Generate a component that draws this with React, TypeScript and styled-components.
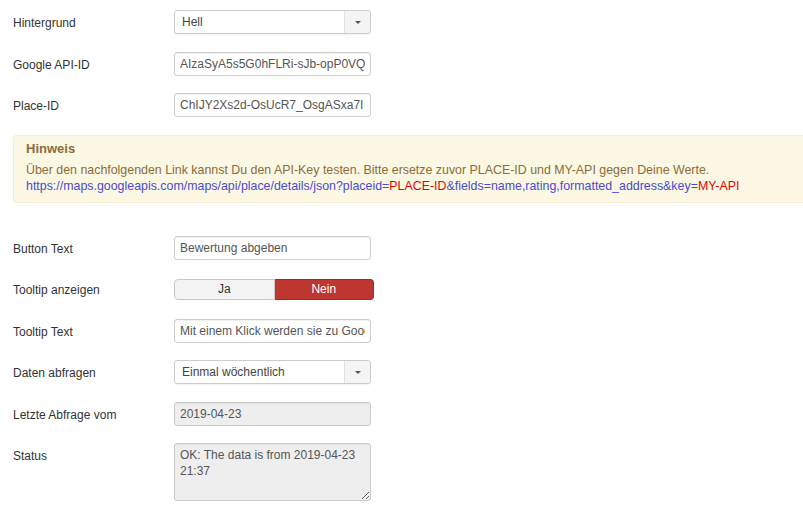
import styled, { createGlobalStyle } from "styled-components";

const GlobalStyle = createGlobalStyle`
  html, body {
    margin: 0;
    padding: 0;
    background: #fff;
    overflow: hidden;
  }
  body {
    font-family: "Liberation Sans", Arial, sans-serif;
    font-size: 12px;
    color: #333;
  }
`;

export default function App() {
  return (
    <>
      <GlobalStyle />
      <Page>
        <Row>
          <Label>Hintergrund</Label>
          <Select>
            <SelectValue>Hell</SelectValue>
            <SelectArrow>
              <Caret />
            </SelectArrow>
          </Select>
        </Row>
        <Row>
          <Label>Google API-ID</Label>
          <TextInput readOnly value="AIzaSyA5s5G0hFLRi-sJb-opP0VQ" />
        </Row>
        <Row>
          <Label>Place-ID</Label>
          <TextInput readOnly value="ChIJY2Xs2d-OsUcR7_OsgASxa7I" />
        </Row>

        <Notice>
          <NoticeTitle>Hinweis</NoticeTitle>
          <NoticeText>
            Über den nachfolgenden Link kannst Du den API-Key testen. Bitte ersetze zuvor PLACE-ID und
            MY-API gegen Deine Werte.
          </NoticeText>
          <NoticeText>
            <Url>https://maps.googleapis.com/maps/api/place/details/json?placeid=</Url>
            <Placeholder>PLACE-ID</Placeholder>
            <Url>&amp;fields=name,rating,formatted_address&amp;key=</Url>
            <Placeholder>MY-API</Placeholder>
          </NoticeText>
        </Notice>

        <Row>
          <Label>Button Text</Label>
          <TextInput readOnly value="Bewertung abgeben" />
        </Row>
        <Row>
          <Label $center>Tooltip anzeigen</Label>
          <Toggle>
            <ToggleButton>Ja</ToggleButton>
            <ToggleButton $active>Nein</ToggleButton>
          </Toggle>
        </Row>
        <Row>
          <Label>Tooltip Text</Label>
          <TextInput readOnly value="Mit einem Klick werden sie zu Google weitergeleitet" />
        </Row>
        <Row>
          <Label>Daten abfragen</Label>
          <Select>
            <SelectValue>Einmal wöchentlich</SelectValue>
            <SelectArrow>
              <Caret />
            </SelectArrow>
          </Select>
        </Row>
        <Row>
          <Label>Letzte Abfrage vom</Label>
          <TextInput disabled value="2019-04-23" />
        </Row>
        <Row>
          <Label>Status</Label>
          <TextArea disabled value={"OK: The data is from 2019-04-23 21:37"} />
        </Row>
      </Page>
    </>
  );
}

const Page = styled.div`
  padding: 10px 0 0 13px;
  width: 100%;
  box-sizing: border-box;
  overflow: hidden;
`;

const Row = styled.div`
  display: flex;
  align-items: flex-start;
  min-height: 24px;
  margin-bottom: 17.5px;
`;

const Label = styled.label<{ $center?: boolean }>`
  width: 161px;
  flex: none;
  padding-top: ${(p) => (p.$center ? "6px" : "6px")};
  line-height: 14px;
  font-size: 12px;
  color: #333;
`;

const fieldBase = `
  box-sizing: border-box;
  width: 197px;
  border: 1px solid #ccc;
  border-radius: 3px;
  font-family: "Liberation Sans", Arial, sans-serif;
  font-size: 12px;
  color: #555;
  background: #fff;
  box-shadow: inset 0 1px 1px rgba(0, 0, 0, 0.06);
  outline: none;
`;

const TextInput = styled.input`
  ${fieldBase}
  height: 24px;
  padding: 0 5px;
  line-height: 22px;
  &:disabled {
    background: #eee;
    color: #555;
  }
`;

const TextArea = styled.textarea`
  ${fieldBase}
  height: 58px;
  padding: 3px 5px;
  line-height: 16px;
  resize: vertical;
  &:disabled {
    background: #eee;
    color: #555;
  }
`;

const Select = styled.div`
  ${fieldBase}
  height: 24px;
  display: flex;
  align-items: stretch;
  box-shadow: 0 1px 1px rgba(0, 0, 0, 0.05);
`;

const SelectValue = styled.span`
  flex: 1;
  padding-left: 7px;
  line-height: 22px;
  color: #444;
`;

const SelectArrow = styled.span`
  width: 25px;
  border-left: 1px solid #e0e0e0;
  background: #f4f4f4;
  display: flex;
  align-items: center;
  justify-content: center;
  border-radius: 0 3px 3px 0;
`;

const Caret = styled.span`
  width: 0;
  height: 0;
  border-left: 3.5px solid transparent;
  border-right: 3.5px solid transparent;
  border-top: 3px solid #555;
`;

const Notice = styled.div`
  margin: 0 -40px 33px 0;
  padding: 4px 14px 8px 12px;
  background: #fcf8e3;
  border: 1px solid #f7ecd3;
  border-radius: 3px;
  color: #8a6d3b;
`;

const NoticeTitle = styled.h4`
  margin: 0 0 4px;
  font-size: 13px;
  line-height: 18px;
  font-weight: bold;
  color: #8a6d3b;
`;

const NoticeText = styled.div`
  font-size: 12.4px;
  line-height: 16px;
  white-space: nowrap;
`;

const Url = styled.span`
  color: #4a4ad6;
`;

const Placeholder = styled.span`
  color: #e00;
`;

const Toggle = styled.div`
  display: flex;
  width: 200px;
  height: 21px;
  margin-top: 2px;
`;

const ToggleButton = styled.button<{ $active?: boolean }>`
  flex: 1;
  padding: 0;
  font-family: "Liberation Sans", Arial, sans-serif;
  font-size: 12px;
  line-height: 19px;
  border: 1px solid ${(p) => (p.$active ? "#a52c26" : "#c8c8c8")};
  background: ${(p) => (p.$active ? "#bd362f" : "#f3f3f3")};
  color: ${(p) => (p.$active ? "#fff" : "#333")};
  border-radius: ${(p) => (p.$active ? "0 4px 4px 0" : "4px 0 0 4px")};
  ${(p) => (p.$active ? "border-left: none;" : "")}
`;
